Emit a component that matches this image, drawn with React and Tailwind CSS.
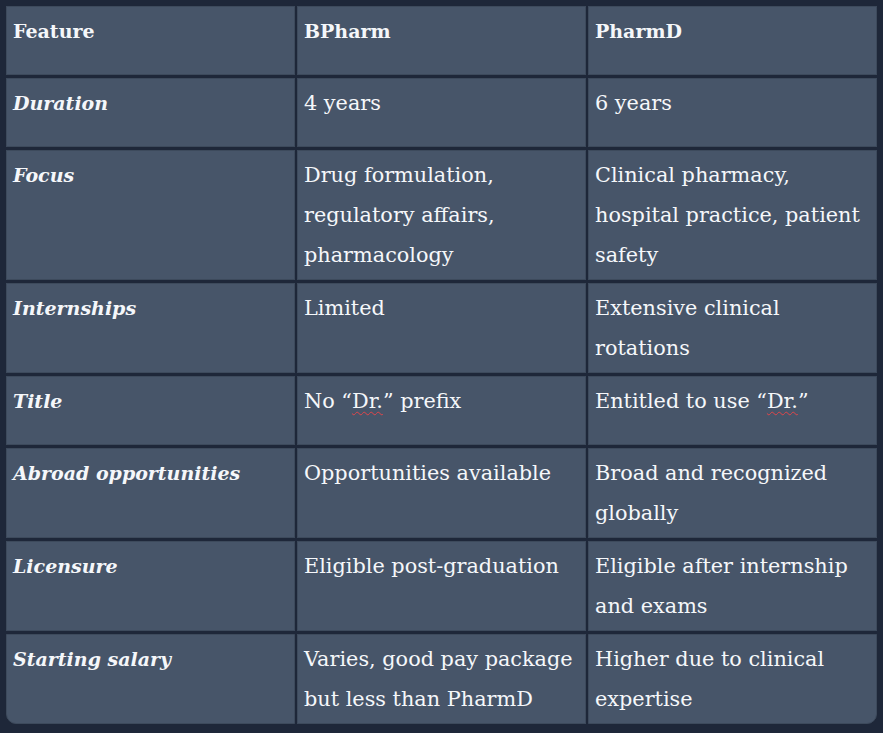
import React from 'react';

const Dr = () => (
    <span className="underline decoration-wavy decoration-[#e0454a] decoration-1 underline-offset-[3px]">Dr.</span>
);

const rows = [
    { f: 'Duration', b: ['4 years'], p: ['6 years'] },
    { f: 'Focus', b: ['Drug formulation,', 'regulatory affairs,', 'pharmacology'], p: ['Clinical pharmacy,', 'hospital practice, patient', 'safety'] },
    { f: 'Internships', b: ['Limited'], p: ['Extensive clinical', 'rotations'] },
    { f: 'Title', b: [<>No “<Dr />” prefix</>], p: [<>Entitled to use “<Dr />”</>] },
    { f: 'Abroad opportunities', b: ['Opportunities available'], p: ['Broad and recognized', 'globally'] },
    { f: 'Licensure', b: ['Eligible post-graduation'], p: ['Eligible after internship', 'and exams'] },
    { f: 'Starting salary', b: ['Varies, good pay package', 'but less than PharmD'], p: ['Higher due to clinical', 'expertise'] },
];

const Cell = ({ children, className = '' }) => (
    <div className={`bg-[#475569] border border-[#3d4a5c] min-h-[69px] px-[6px] py-[4px] leading-[40px] ${className}`}>
        {children}
    </div>
);

const Lines = ({ items }) => items.map((t, i) => <div key={i} className="whitespace-nowrap">{t}</div>);

export default function App() {
    return (
        <div className="w-[883px] h-[733px] bg-[#1e2739] pl-[6px] pt-[6px] overflow-hidden text-[#f5f7fa] text-[19px]" style={{ fontFamily: '"DejaVu Serif", serif' }}>
            <div className="grid grid-cols-[289px_289px_289px] gap-x-[2px] gap-y-[3px]">
                <Cell className="font-bold">Feature</Cell>
                <Cell className="font-bold">BPharm</Cell>
                <Cell className="font-bold">PharmD</Cell>
                {rows.map((r, i) => {
                    const last = i === rows.length - 1;
                    return (
                        <React.Fragment key={r.f}>
                            <Cell className={`font-bold italic ${last ? 'rounded-bl-[10px]' : ''}`}>{r.f}</Cell>
                            <Cell className="text-[20.8px]"><Lines items={r.b} /></Cell>
                            <Cell className={`text-[20.8px] ${last ? 'rounded-br-[10px]' : ''}`}><Lines items={r.p} /></Cell>
                        </React.Fragment>
                    );
                })}
            </div>
        </div>
    );
}
